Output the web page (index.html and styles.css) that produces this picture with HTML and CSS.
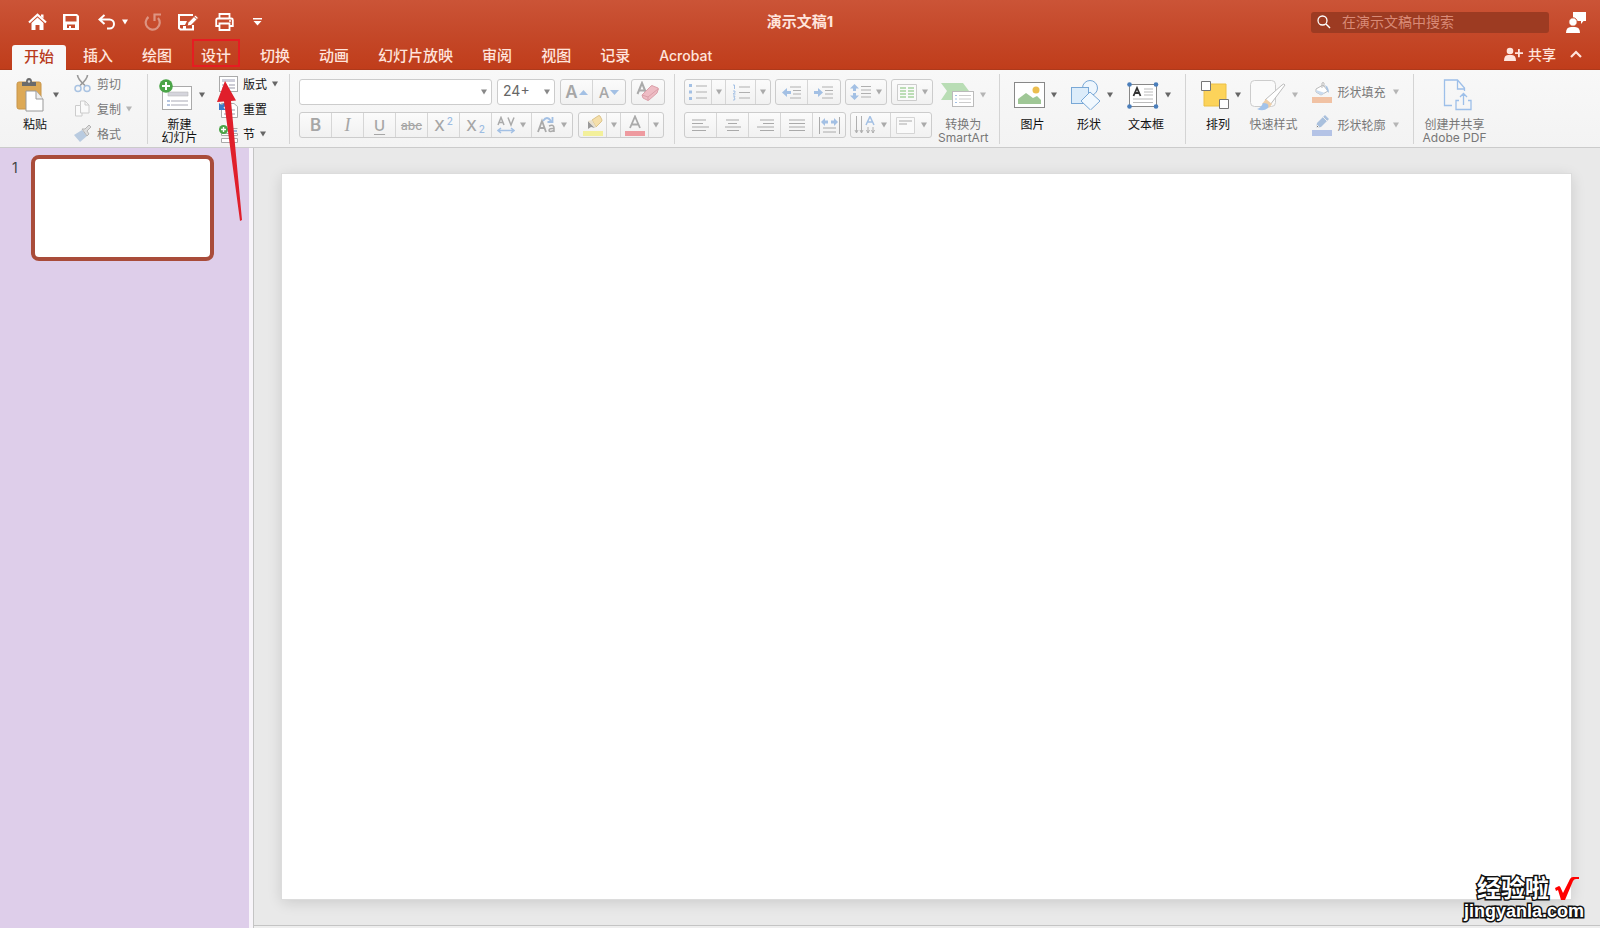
FILE: index.html
```html
<!DOCTYPE html>
<html lang="zh-CN">
<head>
<meta charset="utf-8">
<title>演示文稿1</title>
<link rel="stylesheet" href="styles.css">
</head>
<body>
<svg class="defs" aria-hidden="true">
  <symbol id="caret" viewBox="0 0 6 6"><path d="M0 .5h6L3 5.500z" fill="currentColor"/></symbol>
</svg>
<header class="top">
  <div class="titlebar">
    <div class="quick">
      <button aria-label="主页"><svg width="19" height="18" viewBox="0 0 19 18"><path d="M1 9.500 9.500 1.800 18 9.500" fill="none" stroke="#fff" stroke-width="2.200"/><path d="M13 1.500h2.500v4L13 3.500zM3.500 10l6-5.500 6 5.500v7h-4v-5h-4v5h-4z" fill="#fff"/></svg></button>
      <button aria-label="保存"><svg width="16" height="16" viewBox="0 0 16 16"><path d="M0 0h14l2 2v14H0zM2.500 2v5.500h11V2zM4 10.500V14h2v-2h2v2h4v-3.500z" fill="#fff" fill-rule="evenodd"/></svg></button>
      <button class="undo" aria-label="撤消"><svg width="18" height="16" viewBox="0 0 18 16"><path d="M6.500 1 1.500 5.500l5 4.500M2 5.500h9.500a4.300 4.300 0 0 1 0 9H9" fill="none" stroke="#fff" stroke-width="2"/></svg><svg class="caret"><use href="#caret"/></svg></button>
      <button class="faded" aria-label="重复"><svg width="18" height="18" viewBox="0 0 18 18"><path d="M4.500 4A7 7 0 1 0 14 5M17 1.500h-6.500V8" fill="none" stroke="#fff" stroke-width="2.200"/></svg></button>
      <button aria-label="编辑"><svg width="21" height="17" viewBox="0 0 21 17"><path d="M15 1H1v13l1.500 1.500H15V11" fill="none" stroke="#fff" stroke-width="2"/><path d="M1 7h8l-2 4H1zM5 12h3v4H5z" fill="#fff"/><path d="m9 12 1-3.500L17.500 1 20.500 4 13 11.500z" fill="#fff" stroke="#c64a29"/><path d="m16 2.500 3 3" stroke="#c64a29"/></svg></button>
      <button aria-label="打印"><svg width="19" height="18" viewBox="0 0 19 18"><path d="M4.500 5.500V1h10v4.500M4.500 13H1.200V7q0-1.500 1.500-1.500h13.600q1.500 0 1.500 1.500v6h-3.300M4.500 10.500h10V17h-10z" fill="none" stroke="#fff" stroke-width="1.800"/><circle cx="15" cy="8" r="1" fill="#fff"/></svg></button>
      <button aria-label="自定义工具栏"><svg width="9" height="8" viewBox="0 0 9 8"><path d="M0 0h9v1.500H0zM.5 3h8l-4 4.500z" fill="#fff"/></svg></button>
    </div>
    <h1 class="title">演示文稿1</h1>
    <div class="tools">
      <label class="search"><svg width="14" height="14" viewBox="0 0 14 14"><path d="M9 9l4 4" stroke="#fff" stroke-width="1.500"/><circle cx="5.500" cy="5.500" r="4.500" fill="none" stroke="#fff" stroke-width="1.300"/></svg><input type="search" placeholder="在演示文稿中搜索" aria-label="在演示文稿中搜索"></label>
      <button aria-label="帐户"><svg width="20" height="21" viewBox="0 0 20 21"><path d="M7 0h13v9h-2.500L15 12V9H7z" fill="#fff"/><circle cx="7" cy="10" r="4.200" fill="#fff" stroke="#c64a29"/><path d="M0 21q0-6 5-6h4q5 0 5 6z" fill="#fff"/></svg></button>
    </div>
  </div>
  <nav class="tabs">
    <button class="tab active">开始</button>
    <button class="tab">插入</button>
    <button class="tab">绘图</button>
    <button class="tab marked">设计</button>
    <button class="tab">切换</button>
    <button class="tab">动画</button>
    <button class="tab">幻灯片放映</button>
    <button class="tab">审阅</button>
    <button class="tab">视图</button>
    <button class="tab">记录</button>
    <button class="tab latin">Acrobat</button>
    <div class="share">
      <button><svg width="19" height="14" viewBox="0 0 19 14"><circle cx="6" cy="4" r="3.300" fill="currentColor"/><path d="M0 14q0-6 4-6h4q4 0 4 6zM14 2h1.800v3.300H19V7h-3.200v3.300H14V7h-3V5.300h3z" fill="currentColor"/></svg>共享</button>
      <button aria-label="折叠功能区"><svg width="12" height="8" viewBox="0 0 12 8"><path d="m1 7 5-5 5 5" fill="none" stroke="currentColor" stroke-width="2.200"/></svg></button>
    </div>
  </nav>
</header>

<section class="ribbon">
  <div class="group clipboard">
    <button class="big shift"><span class="pic"><svg width="28" height="34" viewBox="0 0 28 34"><rect x="1" y="4" width="24" height="27" rx="2" fill="#dda956" stroke="#c8954a"/><path d="M6 8V4h4q0-4 3-4t3 4h4v4z" fill="#6b6b6b"/><circle cx="13" cy="3.500" r="1.200" fill="#ddd"/><path d="M10 13h10l7 8v12H10z" fill="#fff" stroke="#999"/><path d="M20 13v8h7" fill="#eee" stroke="#999"/></svg><svg class="caret"><use href="#caret"/></svg></span>粘贴</button>
    <div class="rows3 off">
      <button><svg width="18" height="18" viewBox="0 0 18 18"><path d="M3.500 0q0 4 8 11M13.500 0q0 4-8 11" fill="none" stroke="#999" stroke-width="1.600"/><circle cx="4" cy="13.500" r="3" fill="none" stroke="#a9c3e2" stroke-width="1.500"/><circle cx="13" cy="13.500" r="3" fill="none" stroke="#a9c3e2" stroke-width="1.500"/></svg>剪切</button>
      <button><svg width="18" height="18" viewBox="0 0 18 18"><path d="M1.500 5.500h5V1H11l4 4v8H8v3H1.500zM6.500 5.500V13H8M11 1v4h4" fill="#fafafa" stroke="#ccc"/></svg>复制<svg class="caret"><use href="#caret"/></svg></button>
      <button><svg width="18" height="18" viewBox="0 0 18 18"><path d="m0 10 8-5 5 6-7 6z" fill="#b9cbe0"/><path d="m8 4 5 7 2-2-2-3 4-4-2-2-4 4z" fill="#ddd" stroke="#b5b5b5"/></svg>格式</button>
    </div>
  </div>

  <div class="group slides">
    <button class="big shift"><span class="pic"><svg width="34" height="32" viewBox="0 0 34 32"><rect x="3.500" y="7.500" width="29" height="23" fill="#fff" stroke="#aaa"/><path d="M9 13h20v4H9z" fill="#d5d5dc" stroke="#bbb" stroke-width=".6"/><path d="M8 22h3M8 26h3" stroke="#6c8bc0"/><path d="M12 22h17M12 26h17" stroke="#a9a9b5"/><circle cx="7" cy="7" r="6.800" fill="#4ba548"/><path d="M7 3v8M3 7h8" stroke="#fff" stroke-width="2"/></svg><svg class="caret"><use href="#caret"/></svg></span>新建<br>幻灯片</button>
    <div class="rows3">
      <button><svg width="19" height="16" viewBox="0 0 19 16"><rect x=".5" y=".5" width="18" height="15" fill="#fff" stroke="#aaa"/><path d="M3 3h13v3H3z" fill="#cfcfdb"/><path d="M3 9h5M3 12h5M10 9h6M10 12h6" stroke="#99a"/></svg>版式<svg class="caret"><use href="#caret"/></svg></button>
      <button><svg width="19" height="17" viewBox="0 0 19 17"><path d="M2.500 2.500H15l3.500 3v11h-16z" fill="#fff" stroke="#aaa"/><path d="M12 9h4M5 13h11" stroke="#99a"/><path d="M0 2v7h7L4.500 6.500Q8 3 12 6 8-2 2.500 4z" fill="#3d7cc9"/></svg>重置</button>
      <button><svg width="19" height="18" viewBox="0 0 19 18"><path d="M8 3.500h10.500M2.500 8.500h16v2h-16zM2.500 13.500h16v4h-16z" fill="#fff" stroke="#aaa"/><path d="M10 6h8" stroke="#4a78bd"/><circle cx="4.500" cy="4.500" r="4.500" fill="#4ba548"/><path d="M4.500 2v5M2 4.500h5" stroke="#fff" stroke-width="1.400"/></svg>节<svg class="caret"><use href="#caret"/></svg></button>
    </div>
  </div>

  <div class="group fonts">
    <div class="line">
      <span class="combo name"><select aria-label="字体"><option></option></select><svg class="caret"><use href="#caret"/></svg></span>
      <span class="combo size"><select aria-label="字号"><option>24+</option></select><svg class="caret"><use href="#caret"/></svg></span>
      <div class="seg">
        <button class="letter large" aria-label="增大字号">A<svg width="9" height="5" viewBox="0 0 9 5"><path d="M0 5h9L4.500 0z" fill="#a3c0e4"/></svg></button>
        <button class="letter" aria-label="减小字号">A<svg width="9" height="5" viewBox="0 0 9 5"><path d="M0 0h9L4.500 5z" fill="#a3c0e4"/></svg></button>
      </div>
      <div class="seg"><button aria-label="清除格式"><svg width="24" height="22" viewBox="0 0 24 22"><path d="M1.500 13 6 2l4.500 11M3 9.500h6" fill="none" stroke="#aaa" stroke-width="2"/><path d="m6 14 9-9q1-1 2 0l5 2q1 1 0 2l-1 3-8 7q-1 1-2 0l-4-2z" fill="#eebcc4" stroke="#dba0aa"/><path d="m6 14 6 2 10-8M12 16v3" fill="none" stroke="#dba0aa"/></svg></button></div>
    </div>
    <div class="line">
      <div class="seg">
        <button class="letter large">B</button>
        <button class="letter italic">I</button>
        <button class="letter under">U</button>
        <button class="letter strike">abc</button>
        <button class="letter">X<sup>2</sup></button>
        <button class="letter">X<sub>2</sub></button>
        <button class="mid" aria-label="字符间距"><svg width="18" height="18" viewBox="0 0 18 18"><path d="m1 9 3-7.500L7 9M2 6.500h4M11 1.500 14 9l3-7.500" fill="none" stroke="#aaa" stroke-width="1.500"/><path d="M1 14.500h16M4 12l-3 2.500L4 17M14 12l3 2.500-3 2.500" fill="none" stroke="#a3c0e4" stroke-width="1.500"/></svg><svg class="caret"><use href="#caret"/></svg></button>
        <button class="mid" aria-label="更改大小写"><svg width="19" height="18" viewBox="0 0 19 18"><path d="M1 16 5 5l4 11M2.500 12h5" fill="none" stroke="#aaa" stroke-width="1.800"/><path d="M12 10q5-2 5 2v4m0-3.500q-5-.5-5 1.800t5 .2" fill="none" stroke="#aaa" stroke-width="1.500"/><path d="M6 5q4-6 8 0M15.500 1v5h-5" fill="none" stroke="#a3c0e4" stroke-width="1.800"/></svg><svg class="caret"><use href="#caret"/></svg></button>
      </div>
      <div class="seg">
        <button class="ink" aria-label="突出显示"><svg width="22" height="21" viewBox="0 0 22 21"><path d="M1 16h20v5H1z" fill="#f3f09b"/><path d="m10 5 6-4q1-1 2 0l2 4q0 1-1 2l-5 5z" fill="#f5dfaa" stroke="#dcc48a"/><path d="m6 6 7 7-4-1-3 2z" fill="#999"/><path d="m6 6 4-1 4 7-1 1z" fill="#e9e0cc"/></svg></button>
        <button class="drop" aria-label="突出显示选项"><svg class="caret"><use href="#caret"/></svg></button>
        <button class="ink" aria-label="字体颜色"><svg width="22" height="21" viewBox="0 0 22 21"><path d="M1 16h20v5H1z" fill="#ee9a9f"/><path d="m6 13 5-11.500L16 13M7.500 9.500h7" fill="none" stroke="#aaa" stroke-width="1.800"/></svg></button>
        <button class="drop" aria-label="字体颜色选项"><svg class="caret"><use href="#caret"/></svg></button>
      </div>
    </div>
  </div>

  <div class="group para">
    <div class="stack">
      <div class="line">
        <div class="seg lists">
          <button aria-label="项目符号"><svg width="20" height="16" viewBox="0 0 20 16"><path d="M1 0h3v3H1zM1 6.500h3v3H1zM1 13h3v3H1z" fill="#a3c0e4"/><path d="M8 2h11M8 8h11M8 14h11" stroke="#b0b0b0" stroke-width="1.200"/></svg></button>
          <button class="drop" aria-label="项目符号选项"><svg class="caret"><use href="#caret"/></svg></button>
          <button class="num" aria-label="编号"><svg width="18" height="17" viewBox="0 0 18 17"><path d="M1 1h1.500v4M1 7h2v1.500L1 10h2.500M1 12h2l-1 2 1 .5-.5 1.500H1" fill="none" stroke="#a3c0e4"/><path d="M7 3h11M7 8.500h11M7 14h11" stroke="#b0b0b0" stroke-width="1.200"/></svg></button>
          <button class="drop" aria-label="编号选项"><svg class="caret"><use href="#caret"/></svg></button>
        </div>
        <div class="seg">
          <button aria-label="减少缩进"><svg width="20" height="13" viewBox="0 0 20 13"><path d="M0 6.500 5 2v3h4v3H5v3z" fill="#a3c0e4"/><path d="M8 1h11M11 4.500h8M11 8h8M8 12h11" stroke="#b0b0b0"/></svg></button>
          <button aria-label="增加缩进"><svg width="20" height="13" viewBox="0 0 20 13"><path d="M9 6.500 4 2v3H0v3h4v3z" fill="#a3c0e4"/><path d="M8 1h11M11 4.500h8M11 8h8M8 12h11" stroke="#b0b0b0"/></svg></button>
        </div>
        <div class="seg"><button class="mid" aria-label="行距"><svg width="21" height="16" viewBox="0 0 21 16"><path d="M4.500 0 9 4.500H6V7H3V4.500H0zM4.500 16 9 11.500H6V9H3v2.500H0z" fill="#a3c0e4"/><path d="M11 2.500h10M11 6h10M11 9.500h10M11 13h10" stroke="#b0b0b0"/></svg><svg class="caret"><use href="#caret"/></svg></button></div>
        <div class="seg"><button class="mid" aria-label="分栏"><svg width="20" height="17" viewBox="0 0 20 17"><path d="M.5.500h19v16H.5z" fill="#fafafa" stroke="#ccc"/><path d="M3 4h6M3 7h6M3 10h6M3 13h6M11 4h6M11 7h6M11 10h6M11 13h6" stroke="#a8d3a0" stroke-width="1.600"/></svg><svg class="caret"><use href="#caret"/></svg></button></div>
      </div>
      <div class="line">
        <div class="seg">
          <button aria-label="左对齐"><svg width="18" height="12" viewBox="0 0 18 12"><path d="M0 1h14M0 4.500h11M0 8h17M0 11.500h14" stroke="#aaa"/></svg></button>
          <button aria-label="居中"><svg width="18" height="12" viewBox="0 0 18 12"><path d="M2 1h13M4 4.500h9M1 8h16M3 11.500h12" stroke="#aaa"/></svg></button>
          <button aria-label="右对齐"><svg width="18" height="12" viewBox="0 0 18 12"><path d="M4 1h14M7 4.500h11M1 8h17M4 11.500h14" stroke="#aaa"/></svg></button>
          <button aria-label="两端对齐"><svg width="18" height="12" viewBox="0 0 18 12"><path d="M1 1h16M1 4.500h16M1 8h16M1 11.500h16" stroke="#aaa"/></svg></button>
          <button aria-label="分散对齐"><svg width="21" height="17" viewBox="0 0 21 17"><path d="M.5 0v17M20.500 0v17M4 11h13M4 15h13" stroke="#aaa"/><path d="m2 5 4-4v2.500h3v3H6V9zM19 5l-4-4v2.500h-3v3h3V9z" fill="#a3c0e4"/></svg></button>
        </div>
        <div class="seg">
          <button class="mid" aria-label="文字方向"><svg width="22" height="18" viewBox="0 0 22 18"><path d="M2.500 0v17M7.500 0v17M14 11v6M19 11v6M1 14l1.500 3L4 14M6 14l1.500 3L9 14M12.500 14l1.500 3 1.500-3M17.500 14l1.500 3 1.500-3" fill="none" stroke="#b0b0b0"/><path d="m12 9 4-8.500L20 9M13.500 6h5" fill="none" stroke="#a3c0e4" stroke-width="1.500"/></svg><svg class="caret"><use href="#caret"/></svg></button>
          <button class="mid" aria-label="对齐文本"><svg width="20" height="17" viewBox="0 0 20 17"><path d="M.5.500h18v16H.5z" fill="#fafafa" stroke="#d5d5d5"/><path d="M3 4h13M3 7h8" stroke="#aaa"/></svg><svg class="caret"><use href="#caret"/></svg></button>
        </div>
      </div>
    </div>
    <button class="big off"><span class="pic"><svg width="33" height="24" viewBox="0 0 33 24"><path d="M0 0h22l6 8-6 9H0l6-9z" fill="#b9ddb5"/><rect x="11.500" y="8.500" width="21" height="15" fill="#fff" stroke="#bbb"/><path d="M14 12.500h2M14 16h2M14 19.500h2" stroke="#a3c0e4"/><path d="M18 12.500h12M18 16h12M18 19.500h12" stroke="#ccc"/></svg><svg class="caret"><use href="#caret"/></svg></span>转换为<br>SmartArt</button>
  </div>

  <div class="group insert">
    <button class="big shift"><span class="pic"><svg width="31" height="27" viewBox="0 0 31 27"><rect x=".5" y=".5" width="30" height="25" fill="#fff" stroke="#888"/><path d="M4 22v-5l8-6 7 5 4-2 4 4v4z" fill="#9fc796"/><circle cx="22" cy="8" r="3.500" fill="#ebbd4e"/></svg><svg class="caret"><use href="#caret"/></svg></span>图片</button>
    <button class="big shift"><span class="pic"><svg width="30" height="30" viewBox="0 0 30 30"><circle cx="19" cy="8" r="7.500" fill="#eef6fd" stroke="#79a8d6"/><rect x=".5" y="7.500" width="17" height="16" fill="#dcecfa" stroke="#79a8d6"/><path d="m19 12 10 9-9.500 9L10 21z" fill="#f1f8fe" stroke="#79a8d6"/></svg><svg class="caret"><use href="#caret"/></svg></span>形状</button>
    <button class="big shift"><span class="pic"><svg width="32" height="27" viewBox="0 0 32 27"><rect x="2.500" y="2.500" width="27" height="22" fill="#fff" stroke="#888"/><path d="m6.500 14 3.500-8 3.500 8M8 11h4" fill="none" stroke="#333" stroke-width="1.800"/><path d="M17 7h9M17 10h9M17 13h9M6 17h20M6 20.500h20" stroke="#bbb"/><g fill="#4a7ebb"><circle cx="2.500" cy="2.500" r="2.300"/><circle cx="29" cy="2.500" r="2.300"/><circle cx="2.500" cy="24.500" r="2.300"/><circle cx="29" cy="24.500" r="2.300"/></g></svg><svg class="caret"><use href="#caret"/></svg></span>文本框</button>
  </div>

  <div class="group arrange">
    <button class="big shift"><span class="pic"><svg width="28" height="28" viewBox="0 0 28 28"><path d="M3 3h22v22H3z" fill="#fcd35a" stroke="#ecc044"/><path d="M.5.500h9v9h-9zM18.500 18.500h9v9h-9z" fill="#fff" stroke="#777"/></svg><svg class="caret"><use href="#caret"/></svg></span>排列</button>
    <button class="big off"><span class="pic"><svg width="36" height="32" viewBox="0 0 36 32"><rect x=".5" y="1.500" width="25" height="26" rx="4" fill="#fafafa" stroke="#ccc"/><path d="M35 6 20 26l-5-5L32 6q2-2 3 0z" fill="#fff" stroke="#bbb"/><path d="m16 20 6 5-3 4-7-4z" fill="#efcfa9"/><path d="M13 24q7 0 5 5-5 4-11 1 4-1 6-6z" fill="#a3c3ea"/></svg><svg class="caret"><use href="#caret"/></svg></span>快速样式</button>
    <div class="stack off shape">
      <button><svg width="21" height="21" viewBox="0 0 21 21"><path d="M0 15h20v6H0z" fill="#f1c2a4"/><path d="m4 7 7-4 5 6-7 4-5-3zM10 6V1q1-1 2 0v4" fill="#fff" stroke="#bbb"/><path d="M13 3q4 2 4 8l-2-2z" fill="#a9c4e2"/><path d="m4 8 9 3-4 2-5-3z" fill="#c9dbef"/></svg>形状填充<svg class="caret"><use href="#caret"/></svg></button>
      <button><svg width="21" height="21" viewBox="0 0 21 21"><path d="M0 15h20v6H0z" fill="#b4c3e6"/><path d="m4 13 1-5 8-8 4 4-8 8z" fill="#a9c0dd"/><path d="m4 13 1-3 2 2zM11 2l4 4" fill="#777" stroke="#eee"/></svg>形状轮廓<svg class="caret"><use href="#caret"/></svg></button>
    </div>
  </div>

  <div class="group adobe">
    <button class="big off"><span class="pic"><svg width="30" height="32" viewBox="0 0 30 32"><path d="M9 26.500H1.500V1h13l7 8v3M14.500 1v9h7M16 21.500h-3v9h15v-9h-3M20.500 26V15M17 18l3.500-3.500L24 18" fill="none" stroke="#9dbfe9" stroke-width="1.300"/></svg></span>创建并共享<br>Adobe PDF</button>
  </div>
</section>

<main class="work">
  <aside class="sidebar">
    <span class="index">1</span>
    <button class="thumb" aria-label="幻灯片 1"></button>
  </aside>
  <div class="canvas">
    <div class="stage"><div class="slide"></div></div>
    <div class="notes"></div>
  </div>
</main>

<svg class="pointer" width="28" height="142" viewBox="0 0 28 142" aria-hidden="true"><path d="M9 0 20 19.500l-5 .5 11 119-2 1L8 20.500l-7 .5z" fill="#e01f2b"/></svg>
<div class="watermark">
  <div class="brand">经验啦<svg width="24" height="24" viewBox="0 0 24 24"><path d="m0 11 4-2q1 0 1.500 1.500L8 16 15 2q1-2 3-2h6v2h-3q-2 0-3 2L10 23H6L3 13l-2 1z" fill="#f00"/></svg></div>
  <div class="site">jingyanla.com</div>
</div>
</body>
</html>
```
FILE: styles.css
```css
* { box-sizing: border-box; }

body {
  margin: 0;
  height: 100vh;
  display: flex;
  flex-direction: column;
  overflow: hidden;
  position: relative;
  background: #e9e9e9;
  font: 12px/13px Inter, "Noto Sans CJK SC", sans-serif;
  color: #111;
}

button {
  border: 0;
  padding: 0;
  margin: 0;
  background: none;
  font: inherit;
  color: inherit;
  display: flex;
  align-items: center;
  white-space: nowrap;
}

svg { flex: none; display: block; }
.defs { position: absolute; width: 0; height: 0; }
.caret { width: 6px; height: 6px; color: #666; }

/* title bar and tabs */
.top {
  background: linear-gradient(#cb5437, #c5492a 45%, #c03d1b);
  color: #ffe4dc;
  border-bottom: 1px solid #ad391b;
}
.titlebar {
  display: grid;
  grid-template-columns: 1fr auto 1fr;
  align-items: center;
  height: 44px;
  padding: 0 14px;
}
.quick { display: flex; align-items: center; gap: 16px; padding-left: 14px; }
.quick .undo { gap: 6px; padding-left: 3px; }
.quick .undo .caret { color: #fff; }
.quick button:last-child { padding-left: 3px; }
.faded { opacity: .4; }
.title { margin: 0; font-size: 15px; line-height: 20px; font-weight: 700; }
.tools { display: flex; justify-content: flex-end; align-items: center; gap: 17px; }
.search {
  display: flex;
  align-items: center;
  gap: 11px;
  width: 238px;
  height: 21px;
  padding: 0 6px;
  border-radius: 3px;
  background: #9d3b22;
}
.search input {
  flex: 1;
  min-width: 0;
  border: 0;
  padding: 0;
  background: none;
  color: #fff;
  font: 14px/20px Inter, "Noto Sans CJK SC", sans-serif;
  outline: 0;
}
.search input::placeholder { color: #d98a76; }

.tabs { display: flex; gap: 5px; height: 25px; padding-left: 12px; }
.tab {
  position: relative;
  padding: 0 12px 2px;
  font-size: 15px;
  line-height: 20px;
  font-weight: 500;
}
.tab.latin { font-size: 14px; }
.tab.active {
  margin: 1px 0 -1px;
  border-radius: 3px 3px 0 0;
  background: #f8f8f8;
  color: #b83b1d;
}
.marked::after {
  content: "";
  position: absolute;
  inset: -5px 3px 2px;
  border: 2px solid #e61c22;
}
.share { display: flex; gap: 14px; margin-left: auto; padding: 0 18px 5px 0; font-size: 14px; font-weight: 500; }
.share button { gap: 5px; }

/* ribbon */
.ribbon {
  display: flex;
  padding: 4px 0 3px;
  background: linear-gradient(#f8f8f8, #f3f3f3);
  border-bottom: 1px solid #cbcbcb;
}
.group { display: flex; height: 70px; border-right: 1px solid #d4d4d4; }
.group:last-child { border: 0; }
.big {
  flex-direction: column;
  justify-content: flex-start;
  align-items: center;
  padding-top: 3px;
  text-align: center;
}
.pic { display: flex; align-items: center; gap: 6px; height: 36px; margin-bottom: 5px; }
.shift .pic { margin-right: -5px; }
.off { color: #777; }
.off .caret { color: #b5b5b5; }

.rows3 { display: flex; flex-direction: column; gap: 5px; }
.rows3 button { height: 20px; gap: 5px; }
.clipboard { padding: 0 15px 0 16px; gap: 20px; }
.clipboard .pic { gap: 9px; }
.slides { padding: 0 11px; gap: 19px; }

.fonts, .stack { display: flex; flex-direction: column; gap: 7px; padding-top: 5px; }
.fonts { padding: 5px 9px 0; }
.line { display: flex; gap: 5px; }
.seg {
  display: flex;
  height: 26px;
  border: 1px solid #ccc;
  border-radius: 3px;
  background: linear-gradient(#fbfbfb, #f1f1f1);
  color: #a6a6a6;
}
.seg button { width: 32px; justify-content: center; border-right: 1px solid #d6d6d6; }
.seg button:last-child { border-right: 0; }
.seg .mid { width: 40px; gap: 5px; }
.seg .caret { color: #aaa; }
.seg .drop { width: 14px; }
.seg .ink { width: 28px; }
.lists button:first-child { width: 27px; }
.lists .num { width: 30px; }
.letter { font-size: 15px; font-weight: 500; }
.letter svg { margin-left: 1px; }
.large { font-size: 17px; font-weight: 600; }
.italic { font-family: "Liberation Serif", serif; font-style: italic; font-size: 18px; }
.under { text-decoration: underline; text-underline-offset: 3px; }
.strike { font-size: 12px; text-decoration: line-through; }
.letter sup, .letter sub { font-size: 10px; line-height: 10px; color: #9dbce2; margin-left: 2px; }
.letter sup { align-self: flex-start; padding-top: 3px; }
.letter sub { align-self: flex-end; padding-bottom: 3px; }

.combo {
  display: flex;
  align-items: center;
  height: 26px;
  padding-right: 4px;
  border: 1px solid #ccc;
  border-radius: 3px;
  background: #fff;
}
.combo .caret { color: #888; }
.name { width: 193px; }
.size { width: 58px; }
.combo select {
  appearance: none;
  flex: 1;
  min-width: 0;
  align-self: stretch;
  border: 0;
  padding: 0 0 2px 5px;
  background: none;
  color: #666;
  font: 14px/20px Inter, sans-serif;
}

.para { padding: 0 10px 0 9px; gap: 5px; }
.para .line { gap: 4px; }
.insert { padding: 0 19px 0 14px; gap: 19px; }
.arrange { padding: 0 14px 0 15px; gap: 14px; }
.shape button { height: 26px; gap: 5px; }
.shape .caret { margin-left: 2px; }
.adobe { padding-left: 9px; }
.adobe .pic { padding-left: 6px; }

/* workspace */
.work { flex: 1; display: flex; min-height: 0; }
.sidebar {
  display: flex;
  align-items: flex-start;
  gap: 12px;
  width: 249px;
  padding: 7px 12px;
  background: #deceea;
}
.index { width: 7px; padding-top: 3px; font-size: 14px; line-height: 20px; color: #444; }
.thumb {
  width: 183px;
  aspect-ratio: 183 / 106;
  background: #fff;
  border: 4px solid #a94c3a;
  border-radius: 8px;
}
.canvas {
  flex: 1;
  display: flex;
  flex-direction: column;
  margin-left: 4px;
  border-left: 1px solid #c4c4c4;
  box-shadow: -4px 0 #f8f5fa;
}
.stage { flex: 1; display: flex; padding: 26px 29px 26px 28px; }
.slide { flex: 1; background: #fff; box-shadow: 0 0 0 1px #dcdcdc, 0 3px 14px rgba(0, 0, 0, .14); }
.notes { height: 3px; border-top: 1px solid #c4c4c4; background: #eee; }

/* overlays */
.pointer { position: absolute; left: 216px; top: 81px; }
.watermark {
  position: absolute;
  right: 16px;
  bottom: 7px;
  text-align: right;
  color: #fff;
  font-weight: 700;
  -webkit-text-stroke: 3px #111;
  paint-order: stroke fill;
}
.brand { display: flex; justify-content: flex-end; align-items: center; gap: 6px; padding-right: 5px; font-size: 24px; line-height: 24px; }
.site { font: 700 18px/20px "Liberation Sans", sans-serif; }
```
